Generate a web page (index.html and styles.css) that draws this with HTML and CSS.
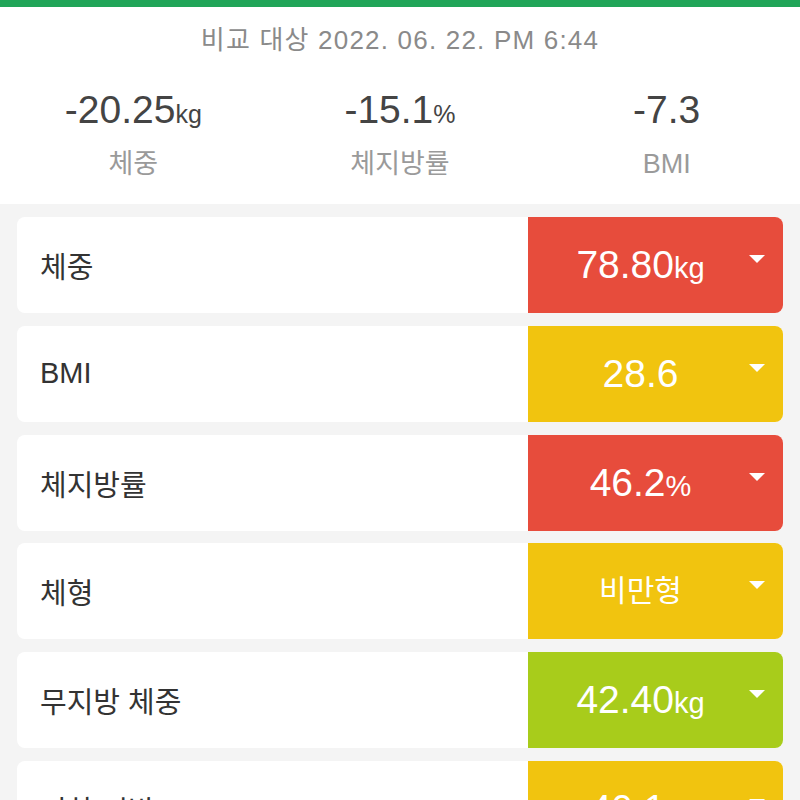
FILE: index.html
```html
<!DOCTYPE html>
<html lang="ko">
<head>
<meta charset="utf-8">
<title>비교</title>
<link rel="stylesheet" href="styles.css">
</head>
<body>
<div class="topbar"></div>
<section class="summary">
  <div class="compare">비교 대상 2022. 06. 22. PM 6:44</div>
  <div class="stats">
    <div class="stat">
      <div class="stat-value">-20.25<span class="unit">kg</span></div>
      <div class="stat-label">체중</div>
    </div>
    <div class="stat">
      <div class="stat-value">-15.1<span class="unit">%</span></div>
      <div class="stat-label">체지방률</div>
    </div>
    <div class="stat">
      <div class="stat-value">-7.3</div>
      <div class="stat-label">BMI</div>
    </div>
  </div>
</section>
<main class="list">
  <div class="card">
    <div class="card-label">체중</div>
    <div class="card-panel red"><span class="card-value">78.80<span class="unit">kg</span></span><span class="caret"></span></div>
  </div>
  <div class="card">
    <div class="card-label">BMI</div>
    <div class="card-panel yellow"><span class="card-value">28.6</span><span class="caret"></span></div>
  </div>
  <div class="card">
    <div class="card-label">체지방률</div>
    <div class="card-panel red"><span class="card-value">46.2<span class="unit">%</span></span><span class="caret"></span></div>
  </div>
  <div class="card">
    <div class="card-label">체형</div>
    <div class="card-panel yellow"><span class="card-value ko">비만형</span><span class="caret"></span></div>
  </div>
  <div class="card">
    <div class="card-label">무지방 체중</div>
    <div class="card-panel green"><span class="card-value">42.40<span class="unit">kg</span></span><span class="caret"></span></div>
  </div>
  <div class="card">
    <div class="card-label">피하 지방</div>
    <div class="card-panel yellow"><span class="card-value">40.1<span class="unit">%</span></span><span class="caret"></span></div>
  </div>
</main>
</body>
</html>
```
FILE: styles.css
```css
* { box-sizing: border-box; }
html, body {
  margin: 0;
  padding: 0;
}
body {
  background: #f4f4f4;
  font-family: "Liberation Sans", "Noto Sans CJK KR", sans-serif;
  width: 800px;
  height: 800px;
  overflow: hidden;
}
.topbar {
  height: 7px;
  background: #21a558;
}
.summary {
  background: #ffffff;
  padding: 18px 0 24px;
}
.compare {
  text-align: center;
  font-size: 26px;
  line-height: 30px;
  letter-spacing: 1.2px;
  color: #8a8a8a;
}
.stats {
  display: grid;
  grid-template-columns: 1fr 1fr 1fr;
  margin-top: 32px;
}
.stat {
  text-align: center;
}
.stat-value {
  font-size: 39px;
  line-height: 46px;
  color: #444444;
}
.unit {
  line-height: 1;
}
.stat-value .unit {
  font-size: 25px;
}
.stat-label {
  margin-top: 15px;
  font-size: 27px;
  line-height: 32px;
  color: #9a9a9a;
}
.list {
  padding: 13px 17px;
  display: flex;
  flex-direction: column;
  gap: 12.8px;
}
.card {
  display: flex;
  height: 96px;
  background: #ffffff;
  border-radius: 8px;
  overflow: hidden;
  flex-shrink: 0;
}
.card-label {
  flex: 1;
  display: flex;
  align-items: center;
  padding-left: 23px;
  font-size: 29px;
  color: #333333;
}
.card-panel {
  position: relative;
  width: 255px;
  display: flex;
  align-items: center;
  justify-content: center;
  padding-right: 30px;
  color: #ffffff;
}
.card-value {
  font-size: 39px;
  line-height: 46px;
}
.card-value .unit {
  font-size: 29px;
}
.card-value.ko {
  font-size: 30px;
}
.caret {
  position: absolute;
  top: 38px;
  right: 18px;
  width: 0;
  height: 0;
  border-left: 8.5px solid transparent;
  border-right: 8.5px solid transparent;
  border-top: 8px solid #ffffff;
}
.red { background: #e74c3c; }
.yellow { background: #f1c40f; }
.green { background: #a8cc1b; }
```
